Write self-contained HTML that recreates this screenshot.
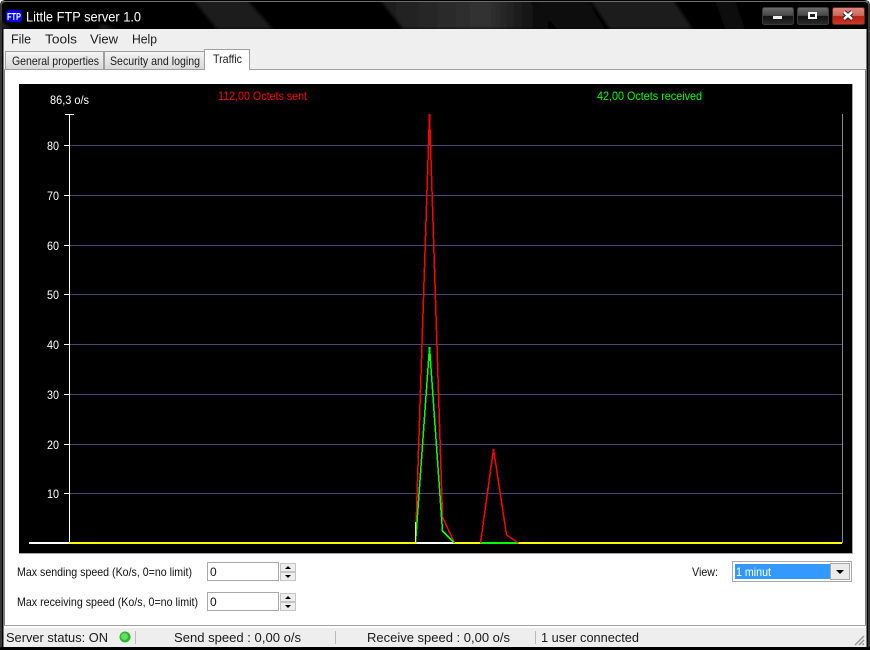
<!DOCTYPE html>
<html><head><meta charset="utf-8"><title>Little FTP server 1.0</title>
<style>
html,body{margin:0;padding:0;background:#fff;width:870px;height:650px;overflow:hidden}
svg{display:block}
text{font-family:"Liberation Sans",sans-serif;font-size:12px;fill:#000}
.t{font-size:13px;fill:#1a1a1a}
.c{font-size:12px;fill:#fff}
</style></head><body>
<svg width="870" height="650" viewBox="0 0 870 650" xmlns="http://www.w3.org/2000/svg">
<defs>
<filter id="b" x="-20%" y="-20%" width="140%" height="140%"><feGaussianBlur stdDeviation="1.500"/></filter>
<linearGradient id="s1" x1="0" x2="1" y1="0" y2="0"><stop offset="0" stop-color="#1c1c1c"/><stop offset=".6" stop-color="#333"/><stop offset="1" stop-color="#000"/></linearGradient>
<linearGradient id="btn" x1="0" x2="0" y1="0" y2="1"><stop offset="0" stop-color="#6e6e6e"/><stop offset=".48" stop-color="#454545"/><stop offset=".52" stop-color="#111"/><stop offset="1" stop-color="#2a2a2a"/></linearGradient>
<linearGradient id="red" x1="0" x2="0" y1="0" y2="1"><stop offset="0" stop-color="#e08a80"/><stop offset=".48" stop-color="#d0665a"/><stop offset=".52" stop-color="#b82010"/><stop offset="1" stop-color="#c83a28"/></linearGradient>
<linearGradient id="tab" x1="0" x2="0" y1="0" y2="1"><stop offset="0" stop-color="#f4f4f4"/><stop offset="1" stop-color="#d8d8d8"/></linearGradient>
<clipPath id="tb"><rect x="0" y="2" width="870" height="27"/></clipPath>
</defs>

<!-- window frame -->
<rect x="0" y="0" width="870" height="650" fill="#fff"/>
<path d="M0 650V6Q0 0 6 0H864Q870 0 870 6V650Z" fill="#000"/>
<path d="M1 650V6Q1 1.500 6 1.500H864Q869 1.500 869 6V650" fill="none" stroke="#6c6c6c" stroke-width="1"/>
<g clip-path="url(#tb)">
<g filter="url(#b)">
<polygon points="193,0 247,0 273,29 217,29" fill="#1c1c1c"/>
<polygon points="380,0 530,0 557,29 403,29" fill="url(#s1)"/>
<polygon points="533,0 587,0 605,29 557,29" fill="#111"/>
<polygon points="590,0 673,0 693,29 610,29" fill="#1a1a1a"/>
<polygon points="715,0 735,0 745,29 725,29" fill="#080808"/>
<polygon points="0,20 12,29 0,29" fill="#222"/>
<polygon points="100,24 118,29 100,29" fill="#222"/>
</g>
</g>
<rect x="1" y="1" width="868" height="1" fill="#6e6e6e"/>

<!-- title -->
<rect x="6" y="10" width="16" height="12" rx="3" fill="#0000ff"/>
<text x="7" y="20" textLength="14" lengthAdjust="spacingAndGlyphs" style="font-size:10px;fill:#fff;font-weight:bold">FTP</text>
<text x="26" y="21.500" textLength="115" lengthAdjust="spacingAndGlyphs" style="font-size:13.500px;fill:#fff">Little FTP server 1.0</text>

<!-- caption buttons -->
<rect x="762.500" y="7.500" width="31" height="17" rx="2" fill="url(#btn)" stroke="#3a3a3a"/>
<rect x="773" y="16" width="9" height="3" fill="#eee"/>
<rect x="797.500" y="7.500" width="31" height="17" rx="2" fill="url(#btn)" stroke="#3a3a3a"/>
<rect x="808" y="12" width="9" height="7" fill="#fff"/><rect x="810" y="14" width="5" height="3" fill="#222"/>
<rect x="832.500" y="7.500" width="32" height="17" rx="2" fill="url(#red)" stroke="#5a2a22"/>
<path d="M844 12l8 7M852 12l-8 7" stroke="#222" stroke-width="4.500"/>
<path d="M844 12l8 7M852 12l-8 7" stroke="#fff" stroke-width="2.500"/>

<!-- client -->
<path d="M4.500 29.500H865.500V646.500H4.500Z" fill="#fff"/>
<rect x="3" y="29" width="1" height="619" fill="#7a7a7a"/>
<rect x="866" y="29" width="1" height="619" fill="#7a7a7a"/>
<rect x="4" y="29" width="862" height="41" fill="#efefef"/>
<rect x="4" y="69" width="862" height="1" fill="#a0a0a0"/>

<!-- menu -->
<text class="t" x="11" y="43.500" textLength="20" lengthAdjust="spacingAndGlyphs">File</text>
<text class="t" x="45" y="43.500" textLength="32" lengthAdjust="spacingAndGlyphs">Tools</text>
<text class="t" x="90" y="43.500" textLength="28" lengthAdjust="spacingAndGlyphs">View</text>
<text class="t" x="132" y="43.500" textLength="25" lengthAdjust="spacingAndGlyphs">Help</text>

<!-- tabs -->
<rect x="5.500" y="51.500" width="98" height="18" fill="url(#tab)" stroke="#a0a0a0"/>
<rect x="104.500" y="51.500" width="100" height="18" fill="url(#tab)" stroke="#a0a0a0"/>
<path d="M204.500 70V49.500H249.500V70" fill="#fff" stroke="#a0a0a0"/>
<rect x="205" y="69" width="44" height="2" fill="#fff"/>
<text x="12" y="65" textLength="87" lengthAdjust="spacingAndGlyphs" style="font-size:12px;fill:#1a1a1a">General properties</text>
<text x="110" y="65" textLength="90" lengthAdjust="spacingAndGlyphs" style="font-size:12px;fill:#1a1a1a">Security and loging</text>
<text x="213" y="63" textLength="29" lengthAdjust="spacingAndGlyphs" style="font-size:12px;fill:#1a1a1a">Traffic</text>

<!-- chart -->
<rect x="19" y="84" width="833" height="469" fill="#000"/>
<rect x="852" y="84" width="1" height="470" fill="#a8a8a8"/>
<rect x="19" y="553" width="834" height="1" fill="#a8a8a8"/>
<g fill="#46466e">
<rect x="69" y="145" width="773" height="1"/>
<rect x="69" y="195" width="773" height="1"/>
<rect x="69" y="245" width="773" height="1"/>
<rect x="69" y="294" width="773" height="1"/>
<rect x="69" y="344" width="773" height="1"/>
<rect x="69" y="394" width="773" height="1"/>
<rect x="69" y="444" width="773" height="1"/>
<rect x="69" y="493" width="773" height="1"/>
</g>
<rect x="842" y="114" width="1" height="429" fill="#8a8a8a"/>
<g fill="#fff">
<rect x="69" y="114" width="1" height="429"/>
<rect x="65" y="114" width="9" height="1"/>
<rect x="64" y="145" width="5" height="1"/>
<rect x="64" y="195" width="5" height="1"/>
<rect x="64" y="245" width="5" height="1"/>
<rect x="64" y="294" width="5" height="1"/>
<rect x="64" y="344" width="5" height="1"/>
<rect x="64" y="394" width="5" height="1"/>
<rect x="64" y="444" width="5" height="1"/>
<rect x="64" y="493" width="5" height="1"/>
<rect x="29" y="542" width="40" height="2"/>
</g>
<text class="c" x="50" y="104" textLength="39" lengthAdjust="spacingAndGlyphs">86,3 o/s</text>
<text x="218" y="100" textLength="89" lengthAdjust="spacingAndGlyphs" style="fill:#ff0000">112,00 Octets sent</text>
<text x="597" y="100" textLength="105" lengthAdjust="spacingAndGlyphs" style="fill:#00ff00">42,00 Octets received</text>
<text class="c" x="47" y="150" textLength="12" lengthAdjust="spacingAndGlyphs">80</text>
<text class="c" x="47" y="200" textLength="12" lengthAdjust="spacingAndGlyphs">70</text>
<text class="c" x="47" y="250" textLength="12" lengthAdjust="spacingAndGlyphs">60</text>
<text class="c" x="47" y="299" textLength="12" lengthAdjust="spacingAndGlyphs">50</text>
<text class="c" x="47" y="349" textLength="12" lengthAdjust="spacingAndGlyphs">40</text>
<text class="c" x="47" y="399" textLength="12" lengthAdjust="spacingAndGlyphs">30</text>
<text class="c" x="47" y="449" textLength="12" lengthAdjust="spacingAndGlyphs">20</text>
<text class="c" x="47" y="498" textLength="12" lengthAdjust="spacingAndGlyphs">10</text>

<!-- baseline -->
<rect x="69" y="542" width="773" height="2" fill="#ffff00"/>
<rect x="416" y="542" width="38" height="2" fill="#fff"/>
<rect x="480" y="542" width="38" height="2" fill="#00ff00"/>

<!-- traces -->
<g fill="none" stroke-width="1.500" shape-rendering="crispEdges">
<polyline points="415.500,543 429.500,114 442.500,517 454.500,543" stroke="#ff0000"/>
<polyline points="480.500,543 493.500,449 506.500,535 518.500,543" stroke="#ff0000"/>
<polyline points="415.500,543 429.500,347 442.500,531 454.500,543" stroke="#00ff00"/>
<rect x="415" y="522" width="1" height="21" fill="#ffff00" stroke="none"/>
</g>

<!-- form -->
<text x="17" y="576" textLength="175" lengthAdjust="spacingAndGlyphs" style="font-size:12px;fill:#111">Max sending speed (Ko/s, 0=no limit)</text>
<text x="17" y="606" textLength="181" lengthAdjust="spacingAndGlyphs" style="font-size:12px;fill:#111">Max receiving speed (Ko/s, 0=no limit)</text>
<rect x="207.500" y="562.500" width="71" height="18" fill="#fff" stroke="#a8a8a8"/>
<rect x="207.500" y="592.500" width="71" height="18" fill="#fff" stroke="#a8a8a8"/>
<text x="210" y="576" style="fill:#111">0</text>
<text x="210" y="606" style="fill:#111">0</text>
<g fill="#eee" stroke="#c4c4c4">
<rect x="280.500" y="563.500" width="15" height="8"/>
<rect x="280.500" y="572.500" width="15" height="8"/>
<rect x="280.500" y="593.500" width="15" height="8"/>
<rect x="280.500" y="602.500" width="15" height="8"/>
</g>
<path d="M285 569h6l-3-3zM285 575h6l-3 3zM285 599h6l-3-3zM285 605h6l-3 3z" fill="#000"/>
<text x="692" y="576" textLength="26" lengthAdjust="spacingAndGlyphs" style="fill:#111">View:</text>
<rect x="732.500" y="561.500" width="119" height="20" fill="#fff" stroke="#a8a8a8"/>
<rect x="735" y="564" width="95" height="15" fill="#3399ff"/>
<text x="736" y="576" textLength="35" lengthAdjust="spacingAndGlyphs" style="fill:#fff">1 minut</text>
<rect x="830.500" y="563.500" width="19" height="16" fill="#ececec" stroke="#a8a8a8"/>
<path d="M836 570h8l-4 4z" fill="#000"/>

<!-- status bar -->
<rect x="4" y="625" width="862" height="1" fill="#a0a0a0"/>
<rect x="4" y="626" width="862" height="2" fill="#fff"/>
<rect x="4" y="628" width="862" height="19" fill="#eeeeee"/>
<rect x="0" y="647" width="870" height="3" fill="#000"/>
<text class="t" x="6" y="642" textLength="102" lengthAdjust="spacingAndGlyphs">Server status: ON</text>
<circle cx="125" cy="637" r="5.500" fill="#2fb52f"/>
<circle cx="124.500" cy="636.500" r="3.500" fill="#5fe05f"/>
<rect x="135" y="631" width="1" height="13" fill="#bbb"/>
<text class="t" x="174" y="642" textLength="127" lengthAdjust="spacingAndGlyphs">Send speed : 0,00 o/s</text>
<rect x="335" y="631" width="1" height="13" fill="#bbb"/>
<text class="t" x="367" y="642" textLength="143" lengthAdjust="spacingAndGlyphs">Receive speed : 0,00 o/s</text>
<rect x="535" y="631" width="1" height="13" fill="#bbb"/>
<text class="t" x="541" y="642" textLength="98" lengthAdjust="spacingAndGlyphs">1 user connected</text>
<path d="M855 645L864 636M859 645L864 640M862.500 645L864 643.500" stroke="#999" stroke-width="1.500" fill="none"/>
</svg>
</body></html>
